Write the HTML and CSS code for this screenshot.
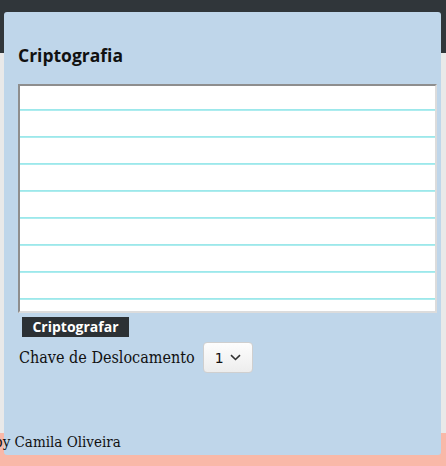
FILE: index.html
```html
<!DOCTYPE html>
<html>
<head>
<meta charset="utf-8">
<link rel="stylesheet" href="styles.css">
</head>
<body>
<div class="card">
  <h1 class="title">Criptografia</h1>
  <textarea class="input"></textarea>
  <div class="actions"><button class="btn">Criptografar</button></div>
  <div class="row">
    <span class="label">Chave de Deslocamento</span>
    <div class="select"><span>1</span><svg width="11" height="7" viewBox="0 0 11 7"><path d="M1 1.2 L5.5 5.5 L10 1.2" fill="none" stroke="#333" stroke-width="1.6"/></svg></div>
  </div>
  <div class="footer">by Camila Oliveira</div>
</div>
</body>
</html>
```
FILE: styles.css
```css
html, body { margin: 0; padding: 0; }
body {
  width: 446px;
  height: 466px;
  overflow: hidden;
  background: linear-gradient(to bottom, #30363a 0, #30363a 53px, #e9e9e9 53px, #e9e9e9 433px, #f9b8a8 433px);
  font-family: "DejaVu Serif Condensed", "DejaVu Serif", serif;
}
.card {
  margin: 12px 5px 0 4px;
  height: 443px;
  box-sizing: border-box;
  background: #bfd6ea;
  border-radius: 3px;
  padding: 32px 0 0 14px;
  display: flex;
  flex-direction: column;
}
.title {
  margin: 0;
  font-family: "Open Sans", "DejaVu Sans", sans-serif;
  font-weight: 700;
  font-size: 17.5px;
  line-height: 22px;
  color: #111;
}
.input {
  display: block;
  margin: 18px 0 0 0;
  width: 419px;
  height: 229px;
  box-sizing: border-box;
  border-style: solid;
  border-width: 2px;
  border-color: #8e8e8e #dcdcdc #dcdcdc #8e8e8e;
  resize: none;
  padding: 0;
  background: repeating-linear-gradient(to bottom, #ffffff 0, #ffffff 23px, #94e6e9 23px, #b5eef0 25px, #ffffff 25px, #ffffff 27px);
}
.actions { margin: 4px 0 0 4px; }
.btn {
  display: block;
  width: 107px;
  height: 20px;
  padding: 0;
  border: none;
  background: #2c3135;
  color: #fff;
  font-family: "Open Sans", "DejaVu Sans", sans-serif;
  font-weight: 700;
  font-size: 14px;
  line-height: 20px;
}
.row {
  display: flex;
  align-items: center;
  margin-top: 5px;
  margin-left: 1px;
}
.label {
  font-size: 16px;
  color: #111;
}
.select {
  margin-left: 8px;
  width: 50px;
  height: 31px;
  box-sizing: border-box;
  border: 1px solid #cfcfcf;
  border-radius: 4px;
  background: linear-gradient(to bottom, #fdfdfd, #ededed);
  display: flex;
  align-items: center;
  justify-content: center;
  gap: 6px;
  font-family: "DejaVu Sans", sans-serif;
  font-size: 14px;
  color: #111;
}
.footer {
  margin-top: auto;
  margin-bottom: 4px;
  margin-left: -24px;
  font-size: 15px;
  color: #111;
}
```
